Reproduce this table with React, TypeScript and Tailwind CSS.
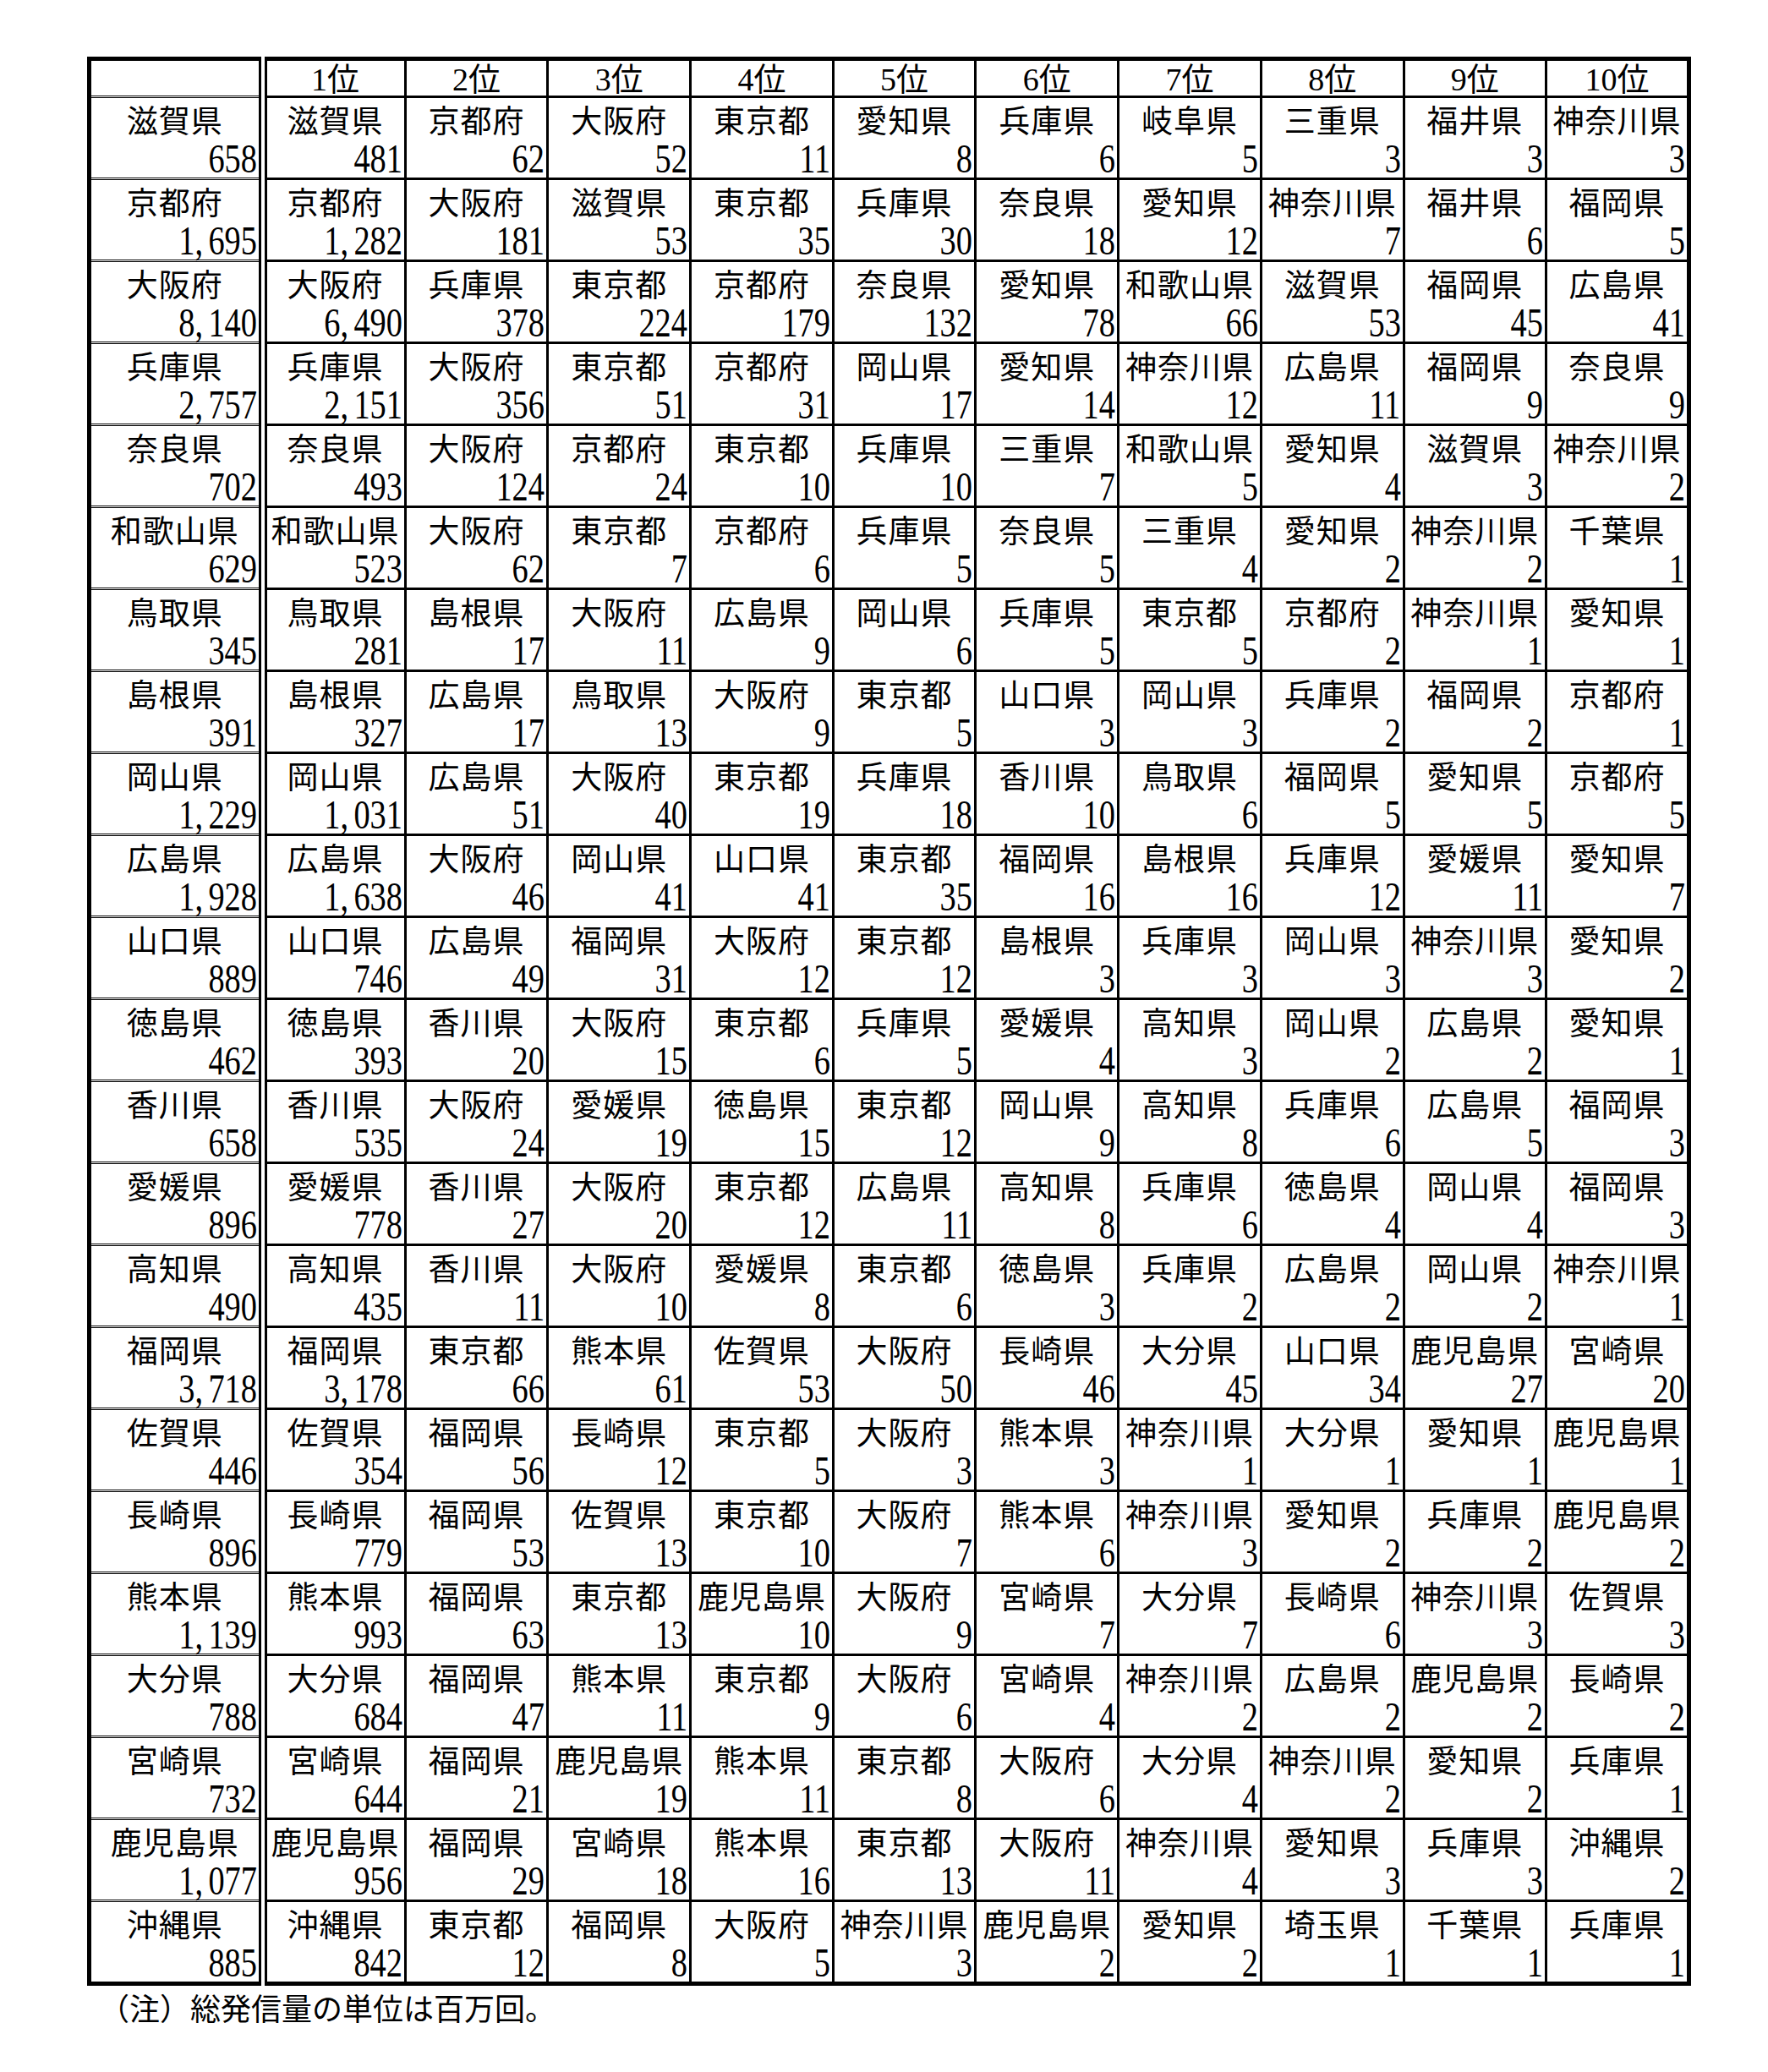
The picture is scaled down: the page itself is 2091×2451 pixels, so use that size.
const data = `
滋賀県:658 滋賀県:481 京都府:62 大阪府:52 東京都:11 愛知県:8 兵庫県:6 岐阜県:5 三重県:3 福井県:3 神奈川県:3
京都府:1,695 京都府:1,282 大阪府:181 滋賀県:53 東京都:35 兵庫県:30 奈良県:18 愛知県:12 神奈川県:7 福井県:6 福岡県:5
大阪府:8,140 大阪府:6,490 兵庫県:378 東京都:224 京都府:179 奈良県:132 愛知県:78 和歌山県:66 滋賀県:53 福岡県:45 広島県:41
兵庫県:2,757 兵庫県:2,151 大阪府:356 東京都:51 京都府:31 岡山県:17 愛知県:14 神奈川県:12 広島県:11 福岡県:9 奈良県:9
奈良県:702 奈良県:493 大阪府:124 京都府:24 東京都:10 兵庫県:10 三重県:7 和歌山県:5 愛知県:4 滋賀県:3 神奈川県:2
和歌山県:629 和歌山県:523 大阪府:62 東京都:7 京都府:6 兵庫県:5 奈良県:5 三重県:4 愛知県:2 神奈川県:2 千葉県:1
鳥取県:345 鳥取県:281 島根県:17 大阪府:11 広島県:9 岡山県:6 兵庫県:5 東京都:5 京都府:2 神奈川県:1 愛知県:1
島根県:391 島根県:327 広島県:17 鳥取県:13 大阪府:9 東京都:5 山口県:3 岡山県:3 兵庫県:2 福岡県:2 京都府:1
岡山県:1,229 岡山県:1,031 広島県:51 大阪府:40 東京都:19 兵庫県:18 香川県:10 鳥取県:6 福岡県:5 愛知県:5 京都府:5
広島県:1,928 広島県:1,638 大阪府:46 岡山県:41 山口県:41 東京都:35 福岡県:16 島根県:16 兵庫県:12 愛媛県:11 愛知県:7
山口県:889 山口県:746 広島県:49 福岡県:31 大阪府:12 東京都:12 島根県:3 兵庫県:3 岡山県:3 神奈川県:3 愛知県:2
徳島県:462 徳島県:393 香川県:20 大阪府:15 東京都:6 兵庫県:5 愛媛県:4 高知県:3 岡山県:2 広島県:2 愛知県:1
香川県:658 香川県:535 大阪府:24 愛媛県:19 徳島県:15 東京都:12 岡山県:9 高知県:8 兵庫県:6 広島県:5 福岡県:3
愛媛県:896 愛媛県:778 香川県:27 大阪府:20 東京都:12 広島県:11 高知県:8 兵庫県:6 徳島県:4 岡山県:4 福岡県:3
高知県:490 高知県:435 香川県:11 大阪府:10 愛媛県:8 東京都:6 徳島県:3 兵庫県:2 広島県:2 岡山県:2 神奈川県:1
福岡県:3,718 福岡県:3,178 東京都:66 熊本県:61 佐賀県:53 大阪府:50 長崎県:46 大分県:45 山口県:34 鹿児島県:27 宮崎県:20
佐賀県:446 佐賀県:354 福岡県:56 長崎県:12 東京都:5 大阪府:3 熊本県:3 神奈川県:1 大分県:1 愛知県:1 鹿児島県:1
長崎県:896 長崎県:779 福岡県:53 佐賀県:13 東京都:10 大阪府:7 熊本県:6 神奈川県:3 愛知県:2 兵庫県:2 鹿児島県:2
熊本県:1,139 熊本県:993 福岡県:63 東京都:13 鹿児島県:10 大阪府:9 宮崎県:7 大分県:7 長崎県:6 神奈川県:3 佐賀県:3
大分県:788 大分県:684 福岡県:47 熊本県:11 東京都:9 大阪府:6 宮崎県:4 神奈川県:2 広島県:2 鹿児島県:2 長崎県:2
宮崎県:732 宮崎県:644 福岡県:21 鹿児島県:19 熊本県:11 東京都:8 大阪府:6 大分県:4 神奈川県:2 愛知県:2 兵庫県:1
鹿児島県:1,077 鹿児島県:956 福岡県:29 宮崎県:18 熊本県:16 東京都:13 大阪府:11 神奈川県:4 愛知県:3 兵庫県:3 沖縄県:2
沖縄県:885 沖縄県:842 東京都:12 福岡県:8 大阪府:5 神奈川県:3 鹿児島県:2 愛知県:2 埼玉県:1 千葉県:1 兵庫県:1
`
  .trim()
  .split('\n')
  .map((line) => line.split(' ').map((c) => c.split(':')))

const ranks = ['1位', '2位', '3位', '4位', '5位', '6位', '7位', '8位', '9位', '10位']

// 千の位のカンマの後ろに少し隙間をあける
function Num({ value }: { value: string }) {
  const parts = value.split(',')
  return (
    <span className="inline-block origin-right scale-x-[0.8] text-[48px] leading-[44px]">
      {parts.map((p, i) => (
        <span key={i}>
          {p}
          {i < parts.length - 1 && <span className="mr-[8px]">,</span>}
        </span>
      ))}
    </span>
  )
}

function Cell({ name, value }: { name: string; value: string }) {
  return (
    <div className="flex h-[94px] flex-col justify-between">
      <div className="pt-[9px] text-center text-[37px] leading-[40px] tracking-[1px]">
        {name}
      </div>
      <div className="pr-[2px] text-right leading-none">
        <Num value={value} />
      </div>
    </div>
  )
}

export default function App() {
  return (
    <div className="min-h-screen bg-white pl-[103px] pt-[67px] font-['Liberation_Serif','Noto_Sans_CJK_JP',serif] text-black">
      <table className="w-[1897px] table-fixed border-collapse border-[5px] border-black">
        <colgroup>
          <col className="w-[205px]" />
          {ranks.map((r) => (
            <col key={r} />
          ))}
        </colgroup>
        <thead>
          <tr className="h-[45px]">
            <th className="border-[3px] border-r-[10px] border-double border-black p-0" />
            {ranks.map((r) => (
              <th
                key={r}
                className="border-[3px] border-black p-0 pt-[2px] text-center text-[38px] font-normal leading-none"
              >
                {r}
              </th>
            ))}
          </tr>
        </thead>
        <tbody>
          {data.map((row, i) => (
            <tr key={i}>
              {row.map(([name, value], j) => (
                <td
                  key={j}
                  className={
                    j === 0
                      ? 'border-[3px] border-r-[10px] border-double border-black p-0 align-top'
                      : 'border-[3px] border-black p-0 align-top'
                  }
                >
                  <Cell name={name} value={value} />
                </td>
              ))}
            </tr>
          ))}
        </tbody>
      </table>
      <p className="ml-[14px] mt-[8px] text-[36px] leading-[42px]">（注）総発信量の単位は百万回。</p>
    </div>
  )
}
